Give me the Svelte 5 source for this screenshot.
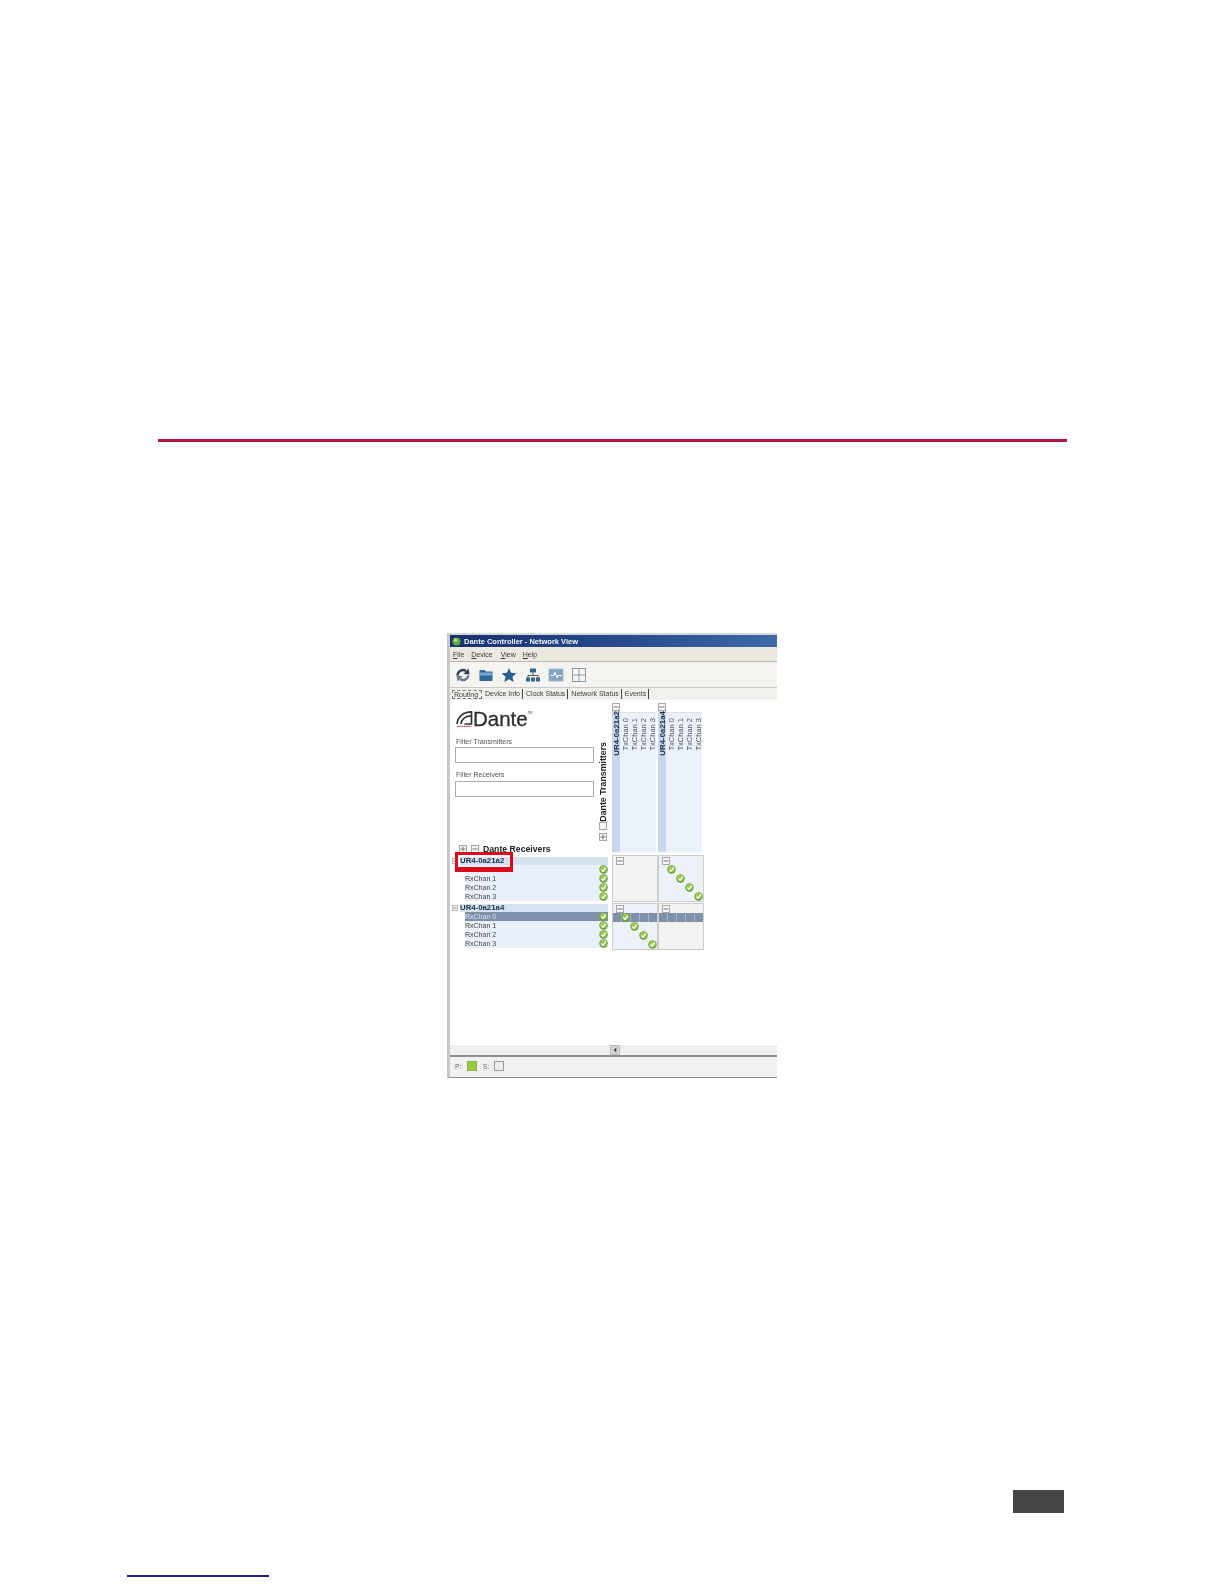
<script>
  const tabs = ['Device Info', 'Clock Status', 'Network Status', 'Events'];
  const chans = [0, 1, 2, 3];
  const txGroups = ['UR4-0a21a2', 'UR4-0a21a4'];
  const rxGroups = [
    { name: 'UR4-0a21a2', selected: -1, covered: 0 },
    { name: 'UR4-0a21a4', selected: 0, covered: -1 }
  ];
  const matrix = [
    [{ on: false }, { on: true }],
    [{ on: true, bar: true }, { on: false, bar: true }]
  ];
</script>

{#snippet check()}
  <svg class="check" viewBox="0 0 10 10" aria-hidden="true">
    <circle cx="5" cy="5" r="4.7" fill="#6fa332" />
    <circle cx="5" cy="4.400" r="3.500" fill="#9cc957" />
    <path d="M2.600 5.100 4.400 7 7.600 2.900" fill="none" stroke="#fff" stroke-width="1.500" />
  </svg>
{/snippet}

{#snippet box(sign)}
  <svg class="box" viewBox="0 0 8 8" aria-hidden="true">
    <rect x=".5" y=".5" width="7" height="7" fill="#f6f6f6" stroke="#a8a8a8" />
    {#if sign !== ''}<path d="M1.500 4h5" stroke="#777" />{/if}
    {#if sign === '+'}<path d="M4 1.500v5" stroke="#777" />{/if}
  </svg>
{/snippet}

<div class="page">
  <div class="rule"></div>

  <div class="window">
    <div class="title">
      <svg class="ball" viewBox="0 0 10 10" aria-hidden="true">
        <circle cx="5" cy="5" r="4.500" fill="#5fae3a" />
        <circle cx="4" cy="3.600" r="1.800" fill="#b7e08f" />
      </svg>
      <span>Dante Controller - Network View</span>
    </div>

    <div class="menu">
      <span><u>F</u>ile</span>
      <span><u>D</u>evice</span>
      <span><u>V</u>iew</span>
      <span><u>H</u>elp</span>
    </div>

    <div class="toolbar">
      <svg viewBox="0 0 16 16" aria-hidden="true">
        <path d="M2.500 8.500A5.500 5.500 0 0 1 11 4" fill="none" stroke="#2f3f52" stroke-width="2.400" />
        <path d="M8.500 7 14.500 7.500 13.500 1.500Z" fill="#2f3f52" />
        <path d="M13.500 8.500A5.500 5.500 0 0 1 5 12" fill="none" stroke="#66778a" stroke-width="2.400" />
        <path d="M7.500 9 1.500 8.500 2.500 14.500Z" fill="#66778a" />
      </svg>
      <svg viewBox="0 0 16 16" aria-hidden="true">
        <path d="M1.500 3h5L8 4.500h6.500V14h-13Z" fill="#2f6a9c" />
        <rect x="1.500" y="5.500" width="13" height="3" fill="#7ca6c8" />
      </svg>
      <svg viewBox="0 0 16 16" aria-hidden="true">
        <path d="M8 1 10.100 5.800 15.500 6.300 11.400 9.800 12.700 15 8 12.200 3.300 15 4.600 9.800.5 6.300 5.900 5.800Z" fill="#2a5f8f" />
      </svg>
      <svg viewBox="0 0 16 16" aria-hidden="true">
        <rect x="5" y="1.500" width="6" height="4" fill="#33658f" />
        <path d="M8 5.500v3M3 11V8.500h10V11" fill="none" stroke="#555" />
        <rect x="1" y="10.500" width="4" height="4" fill="#33658f" />
        <rect x="6" y="10.500" width="4" height="4" fill="#33658f" />
        <rect x="11" y="10.500" width="4" height="4" fill="#33658f" />
      </svg>
      <svg viewBox="0 0 16 16" aria-hidden="true">
        <rect x="1" y="2" width="14" height="12" fill="#7ea6c9" stroke="#a9b6c2" />
        <path d="M2.500 8.500h3l1.500-3 2 5 1.500-2h3.500" fill="none" stroke="#fff" stroke-width="1.100" />
      </svg>
      <svg viewBox="0 0 16 16" aria-hidden="true">
        <rect x="1.500" y="1.500" width="13" height="13" fill="#f6f6f6" stroke="#8e9aa6" />
        <path d="M8 1.500v13M1.500 8h13" stroke="#8e9aa6" />
      </svg>
    </div>

    <div class="tabs">
      <span class="active">Routing</span>
      {#each tabs as tab}
        <span class="tab">{tab}</span>
      {/each}
    </div>

    <div class="body">
      <div class="left-top">
        <div class="upper">
          <div class="filters">
            <div class="logo">
              <svg viewBox="0 0 18 18" aria-hidden="true">
                <path d="M1 14C1.500 7 7 1.800 15.500 1.800V14H8.500" fill="none" stroke="#333" stroke-width="1.700" />
                <path d="M5 14C5.500 9.500 9 6 15 5.800" fill="none" stroke="#333" stroke-width="1.700" />
                <path d="M1 16.400h14.500" stroke="#c5354a" stroke-width="1.300" stroke-dasharray="1.500 .8" />
              </svg>
              <span class="word">Dante</span><span class="tm">TM</span>
            </div>
            <div class="label first">Filter Transmitters</div>
            <div class="input"></div>
            <div class="label second">Filter Receivers</div>
            <div class="input"></div>
          </div>
          <div class="tx-side">
            <span class="vertical heading">Dante Transmitters</span>
            {@render box('')}
            {@render box('+')}
          </div>
        </div>
        <div class="rx-head">
          {@render box('+')}
          {@render box('-')}
          <span>Dante Receivers</span>
        </div>
      </div>

      <div class="columns">
        {#each txGroups as group}
          <div class="tx-group">
            <div class="tx-main">
              {@render box('-')}
              <span class="vertical strong">{group}</span>
            </div>
            <div class="tx-chans">
              {#each chans as c}
                <span class="vertical">TxChan {c}</span>
              {/each}
            </div>
          </div>
        {/each}
      </div>

      <div class="left-bottom">
        <div class="marker"></div>
        {#each rxGroups as group}
          <div class="rx-group">
            <div class="rx-name">
              {@render box('-')}
              <span>{group.name}</span>
            </div>
            {#each chans as c}
              <div class="rx-row" class:selected={c === group.selected}>
                <span class:covered={c === group.covered}>RxChan {c}</span>
                {@render check()}
              </div>
            {/each}
          </div>
        {/each}
      </div>

      <div class="matrix">
        {#each matrix as row}
          <div class="matrix-row">
            {#each row as cell}
              <div class="cell" class:tinted={cell.on}>
                <div class="cell-head">{@render box('-')}</div>
                {#each chans as c}
                  <div class="cell-row" class:bar={cell.bar && c === 0}>
                    {#each chans as k}
                      <div class="slot">
                        {#if cell.on && k === c}{@render check()}{/if}
                      </div>
                    {/each}
                  </div>
                {/each}
              </div>
            {/each}
          </div>
        {/each}
      </div>
    </div>

    <div class="scrollbar">
      <div class="thumb"><svg viewBox="0 0 6 6" aria-hidden="true"><path d="M4 1 2 3l2 2Z" fill="#444" /></svg></div>
    </div>

    <div class="status">
      <span>P:</span><i class="led green"></i>
      <span class="s">S:</span><i class="led"></i>
    </div>
  </div>

  <div class="page-number"></div>
  <div class="link-line"></div>
</div>

<style>
  :global(body) {
    margin: 0;
    background: #fff;
  }
  .page {
    width: 1224px;
    height: 1584px;
    box-sizing: border-box;
    padding-top: 439px;
    display: flex;
    flex-direction: column;
    overflow: hidden;
  }
  .rule {
    height: 3px;
    margin-left: 158px;
    width: 909px;
    background: #b5163f;
    flex: none;
  }
  .window {
    flex: none;
    width: 330px;
    height: 445px;
    margin: 191px 0 0 447px;
    box-sizing: border-box;
    border-left: 3px solid #c8c8c8;
    border-top: 2px solid #d6d6d6;
    border-bottom: 1px solid #8a8a8a;
    display: flex;
    flex-direction: column;
    font: 7px/9px "Liberation Sans", Arial, sans-serif;
    color: #3b3b3b;
    background: #fff;
    filter: blur(0.45px);
  }
  .title {
    height: 12px;
    flex: none;
    display: flex;
    align-items: center;
    gap: 3px;
    padding-left: 2px;
    background: linear-gradient(90deg, #17306f 0%, #2a4f8f 60%, #3d6aa8 100%);
    color: #f2f4fa;
    font-weight: 700;
    font-size: 7.500px;
  }
  .ball {
    width: 9px;
    height: 9px;
  }
  .menu {
    height: 14px;
    flex: none;
    display: flex;
    align-items: center;
    padding-left: 3px;
    gap: 7px;
    background: #ebe8e0;
  }
  .menu span:nth-child(3) { margin-left: 1px; }
  .toolbar {
    height: 27px;
    flex: none;
    box-sizing: border-box;
    display: flex;
    align-items: center;
    gap: 7.200px;
    padding-left: 5px;
    background: #f5f4f1;
    border-top: 1px solid #b8b8b8;
    border-bottom: 1px solid #c8c8c8;
  }
  .toolbar svg {
    width: 16px;
    height: 16px;
  }
  .tabs {
    height: 12px;
    flex: none;
    display: flex;
    align-items: center;
    padding-left: 2px;
    background: #f1f0ed;
  }
  .active {
    border: 1px dashed #777;
    padding: 0 1px;
    height: 9px;
    line-height: 8px;
    box-sizing: border-box;
    width: 30px;
  }
  .tab {
    border-right: 1px solid #444;
    padding: 0 2px 0 3px;
    height: 10px;
    line-height: 10px;
  }
  .body {
    height: 345px;
    flex: none;
    display: grid;
    grid-template-columns: 162px 92px;
    grid-template-rows: 155px 190px;
    background: #fff;
  }
  .left-top {
    display: flex;
    flex-direction: column;
    justify-content: space-between;
  }
  .upper {
    display: flex;
    height: 143px;
  }
  .filters {
    width: 148px;
    padding: 10px 0 0 6px;
    box-sizing: border-box;
  }
  .logo {
    display: flex;
    align-items: center;
    height: 18px;
    color: #2e2e2e;
  }
  .logo svg {
    width: 18px;
    height: 18px;
    flex: none;
  }
  .word {
    font-size: 20.500px;
    line-height: 18px;
    margin-left: -1px;
    -webkit-text-stroke: .3px #2e2e2e;
  }
  .tm {
    font-size: 3px;
    align-self: flex-start;
    line-height: 6px;
  }
  .label.first { margin-top: 9px; }
  .label.second {
    margin-top: 7px;
    height: 10px;
  }
  .label {
    height: 9px;
    color: #555;
  }
  .input {
    width: 139px;
    height: 16px;
    box-sizing: border-box;
    margin: 1px 0 0 -1px;
    border: 1px solid #aaa;
    background: #fff;
  }
  .vertical {
    writing-mode: vertical-rl;
    transform: rotate(180deg);
    white-space: nowrap;
  }
  .tx-side {
    width: 10px;
    display: flex;
    flex-direction: column;
    align-items: center;
    justify-content: flex-end;
    gap: 3px;
    padding-bottom: 2px;
    box-sizing: border-box;
  }
  .heading {
    font-weight: 700;
    font-size: 8.800px;
    color: #222;
    margin-bottom: -3px;
  }
  .box {
    width: 8px;
    height: 8px;
    flex: none;
    display: block;
  }
  .rx-head {
    height: 10px;
    display: flex;
    align-items: center;
    gap: 4px;
    padding-left: 9px;
    margin-bottom: 1px;
    font-weight: 700;
    font-size: 8.700px;
    color: #222;
  }
  .columns {
    display: flex;
    padding-top: 3px;
    box-sizing: border-box;
  }
  .tx-group {
    width: 46px;
    display: flex;
  }
  .tx-main {
    width: 8px;
    display: flex;
    flex-direction: column;
    background: linear-gradient(#fff 7px, #c5d9ea 7px);
    font-weight: 700;
    font-size: 7.900px;
    color: #1c2a4a;
    align-items: center;
    flex: none;
    height: 149px;
  }
  .tx-chans {
    display: flex;
    flex: none;
    align-items: flex-start;
    width: 36px;
    height: 140px;
    margin-top: 9px;
    padding: 5px 0 0 1px;
    background: #eaf1f9;
    border-top: 1px solid #dde;
    box-sizing: border-box;
  }
  .tx-chans span {
    width: 9px;
    line-height: 9px;
    font-size: 7.500px;
    color: #555;
  }
  .left-bottom {
    position: relative;
    padding: 2px 4px 0 0;
  }
  .marker {
    position: absolute;
    left: 5px;
    top: -3px;
    width: 58px;
    height: 20px;
    box-sizing: border-box;
    border: 3px solid #dc0a1a;
    border-bottom-width: 5px;
    z-index: 1;
  }
  .rx-group {
    padding-left: 2px;
    margin-bottom: 3px;
  }
  .rx-name {
    height: 8px;
    display: flex;
    align-items: center;
    font-weight: 700;
    color: #1c2a4a;
    font-size: 7.800px;
  }
  .rx-name .box {
    width: 6px;
    height: 6px;
    margin-right: 2px;
  }
  .rx-name span {
    flex: 1;
    line-height: 8px;
    background: #d5e3f1;
  }
  .rx-row {
    height: 9px;
    margin-left: 13px;
    display: flex;
    justify-content: space-between;
    align-items: center;
    background: #e9f0f9;
    color: #444;
  }
  .rx-row .covered {
    color: transparent;
  }
  .rx-row.selected {
    background: #7f90ab;
    color: #dfe3ea;
  }
  .check {
    width: 9px;
    height: 9px;
    flex: none;
    display: block;
  }
  .matrix-row {
    display: flex;
    margin-bottom: 1px;
  }
  .cell {
    width: 46px;
    height: 47px;
    box-sizing: border-box;
    border: 1px solid #cdcdcd;
    background: #f4f3f1;
  }
  .cell.tinted {
    background: #edf2f9;
  }
  .cell-head {
    height: 9px;
    padding: 1px 0 0 3px;
    box-sizing: border-box;
  }
  .cell-row {
    display: flex;
    height: 9px;
    padding-left: 8px;
  }
  .cell-row.bar {
    background: repeating-linear-gradient(90deg, #7f90ab 0 8px, #a7b2c4 8px 9px);
  }
  .slot {
    width: 9px;
    height: 9px;
    flex: none;
  }
  .scrollbar {
    height: 10px;
    flex: none;
    background: #efefef;
    padding-left: 160px;
  }
  .thumb {
    width: 10px;
    height: 10px;
    box-sizing: border-box;
    background: #d4d4d4;
    border: 1px solid #bdbdbd;
    display: flex;
  }
  .thumb svg {
    width: 8px;
    height: 8px;
  }
  .status {
    flex: 1;
    border-top: 2px solid #8f8f8f;
    background: #f1f1ef;
    display: flex;
    align-items: center;
    padding: 0 0 2px 5px;
    gap: 3px;
    color: #666;
  }
  .s { margin-left: 3px; }
  .led {
    width: 10px;
    height: 10px;
    box-sizing: border-box;
    border: 1px solid #999;
    background: #eee;
    margin-left: 2px;
  }
  .led.green {
    background: #9acb38;
    border-color: #88b05a;
  }
  .page-number {
    flex: none;
    width: 51px;
    height: 23px;
    margin: 412px 0 0 1013px;
    background: #454545;
  }
  .link-line {
    flex: none;
    width: 142px;
    height: 2px;
    margin: 62px 0 0 127px;
    background: #1d1d96;
  }
</style>
